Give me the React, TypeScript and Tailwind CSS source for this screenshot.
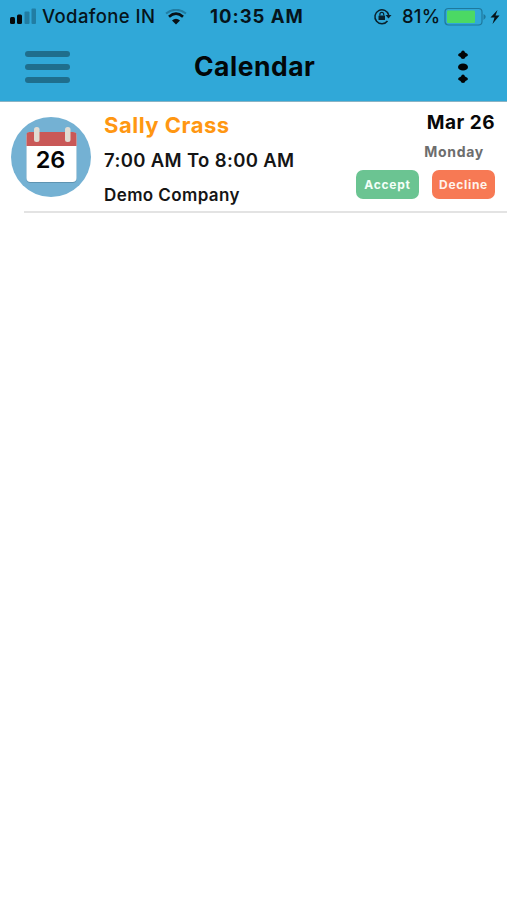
function StatusBar() {
  return (
    <div className="flex h-[33px] items-center text-[18px] leading-[33px] whitespace-nowrap text-[#06141b]">
      <svg className="ml-[9px] h-[18px] w-[28px] shrink-0" viewBox="0 0 28 18">
        <rect x="1" y="9" width="5" height="7" rx="1.5" fill="#06090b" />
        <rect x="8" y="6.5" width="5" height="9.5" rx="1.5" fill="#06090b" />
        <rect x="15.5" y="3.5" width="5" height="12.5" rx="1" fill="#217da3" />
        <rect x="22.5" y="0.5" width="4.5" height="15.5" rx="1" fill="#217da3" />
      </svg>
      <div className="ml-[5px] w-[113px] text-[18.5px] font-medium tracking-[0.4px]">Vodafone IN</div>
      <svg className="ml-[9px] h-[16px] w-[24px] shrink-0" viewBox="0 0 24 16" fill="none">
        <path d="M2 4.5Q12-3 22 4.5" stroke="#217da3" strokeWidth="2" />
        <path d="M5 7.7Q12 1.7 19 7.7" stroke="#081116" strokeWidth="2.7" />
        <path d="M8 11.5Q12 8 16 11.5L12 15.5Z" fill="#081116" />
      </svg>
      <div className="ml-[22px] w-[95px] text-[18.5px] font-bold tracking-[1px]">10:35 AM</div>
      <svg className="ml-[68px] h-[18px] w-[19px] shrink-0" viewBox="0 0 19 18" fill="none" stroke="#09212c">
        <path d="M14.5 13A7 7 0 1 1 15.7 7" strokeWidth="1.5" />
        <path d="M12.5 7H18.5L15.5 10.5Z" fill="#09212c" stroke="none" />
        <rect x="5.5" y="7.5" width="6.5" height="4.5" rx="0.5" fill="#09212c" stroke="none" />
        <path d="M6.9 7.5V6.2a1.9 1.9 0 0 1 3.8 0V7.5" strokeWidth="1.2" />
      </svg>
      <div className="ml-[10px] w-[38px] text-[18.5px] font-medium tracking-[0.2px]">81%</div>
      <svg className="ml-[4px] h-[20px] w-[57px] shrink-0" viewBox="0 0 57 20">
        <rect x="1" y="1.5" width="37" height="16.5" rx="3.5" fill="none" stroke="#1e789d" strokeWidth="1.2" />
        <rect x="3" y="3.5" width="28" height="12.5" rx="1" fill="#4bd964" />
        <path d="M39.5 7Q44 9.5 39.5 13Z" fill="#1e789d" />
        <path d="M53.5 3L46.5 10.5H50.5L48.5 17L55.5 8.5H51.5Z" fill="#06141b" />
      </svg>
    </div>
  );
}

function Header() {
  return (
    <header className="h-[102px] border-b border-[#89b3c4] bg-[#30a8d8]">
      <StatusBar />
      <div className="flex h-[67px] items-center">
        <div className="ml-[25px] flex w-[45px] flex-col gap-[7px]">
          <span className="h-[6px] rounded-full bg-[#1f6e8d]" />
          <span className="h-[6px] rounded-full bg-[#1f6e8d]" />
          <span className="h-[6px] rounded-full bg-[#1f6e8d]" />
        </div>
        <h1 className="ml-[124px] w-[130px] text-[26.5px] font-bold tracking-[0.5px] whitespace-nowrap text-[#020709]">Calendar</h1>
        <svg className="ml-[133px] h-[36px] w-[12px]" viewBox="0 0 12 36" fill="#020506">
          <path d="M6 1.5Q7.5 1.5 8 3.5Q11 4.5 11 6Q11 7 8.500 8Q8 10 6 10Q4 10 3.500 8Q1 7 1 6Q1 4.500 4 3.500Q4.500 1.500 6 1.500Z" />
          <ellipse cx="6" cy="18" rx="5" ry="3.600" />
          <path d="M6 25.5Q7.500 25.500 8 27.500Q11 28.500 11 30Q11 31 8.500 32Q8 34 6 34Q4 34 3.500 32Q1 31 1 30Q1 28.500 4 27.500Q4.500 25.500 6 25.500Z" />
        </svg>
      </div>
    </header>
  );
}

function DateIcon() {
  return (
    <svg className="mt-[15px] ml-[11px] h-[80px] w-[80px] shrink-0" viewBox="0 0 80 80">
      <circle cx="40" cy="40" r="40" fill="#74b1d3" />
      <rect x="15.5" y="17" width="50" height="49" rx="4" fill="#5e94b2" />
      <rect x="15.5" y="15" width="50" height="50" rx="4" fill="#fff" />
      <path d="M15.5 29V18q0-3 3-3H62q3.5 0 3.5 3V29Z" fill="#c95857" />
      <rect x="23" y="10" width="5.5" height="15" rx="2.5" fill="#e1dcd3" />
      <rect x="54" y="10" width="5.5" height="15" rx="2.5" fill="#e1dcd3" />
      <text x="39.5" y="50.5" textAnchor="middle" fontSize="23.5" fontWeight="600" fill="#050505">26</text>
    </svg>
  );
}

function Appointment() {
  return (
    <section>
      <div className="flex h-[109px] whitespace-nowrap">
        <DateIcon />
        <div className="ml-[13px] w-[220px] pt-[8px]">
          <h2 className="h-[35px] text-[22px] leading-[30px] font-bold tracking-[0.5px] text-[#ff9712]">Sally Crass</h2>
          <p className="h-[35px] text-[18.5px] leading-[30px] font-semibold tracking-[0.35px] text-[#151515]">7:00 AM To 8:00 AM</p>
          <p className="text-[17px] leading-[30px] font-semibold tracking-[0.4px] text-[#151515]">Demo Company</p>
        </div>
        <div className="ml-auto flex w-[140px] flex-col pt-[6px] pr-[12px]">
          <div className="h-[29px] text-right text-[19px] leading-[30px] font-bold tracking-[0.5px] text-[#080808]">Mar 26</div>
          <div className="h-[33px] pr-[11px] text-right text-[14px] leading-[30px] font-bold tracking-[0.7px] text-[#6d6d6d]">Monday</div>
          <div className="flex justify-end gap-[13px]">
            <button className="h-[29px] w-[63px] shrink-0 rounded-[7px] bg-[#6bc492] text-[12px] font-bold tracking-[0.75px] text-[#f3fff8]">Accept</button>
            <button className="h-[29px] w-[63px] shrink-0 rounded-[7px] bg-[#f77954] text-[12px] font-bold tracking-[0.7px] text-[#fff3eb]">Decline</button>
          </div>
        </div>
      </div>
      <div className="ml-[24px] h-[2px] bg-[#e3e3e3]" />
    </section>
  );
}

export default function App() {
  return (
    <main className="h-[900px] w-[507px] overflow-hidden bg-white font-['Inter',sans-serif]">
      <Header />
      <Appointment />
    </main>
  );
}
